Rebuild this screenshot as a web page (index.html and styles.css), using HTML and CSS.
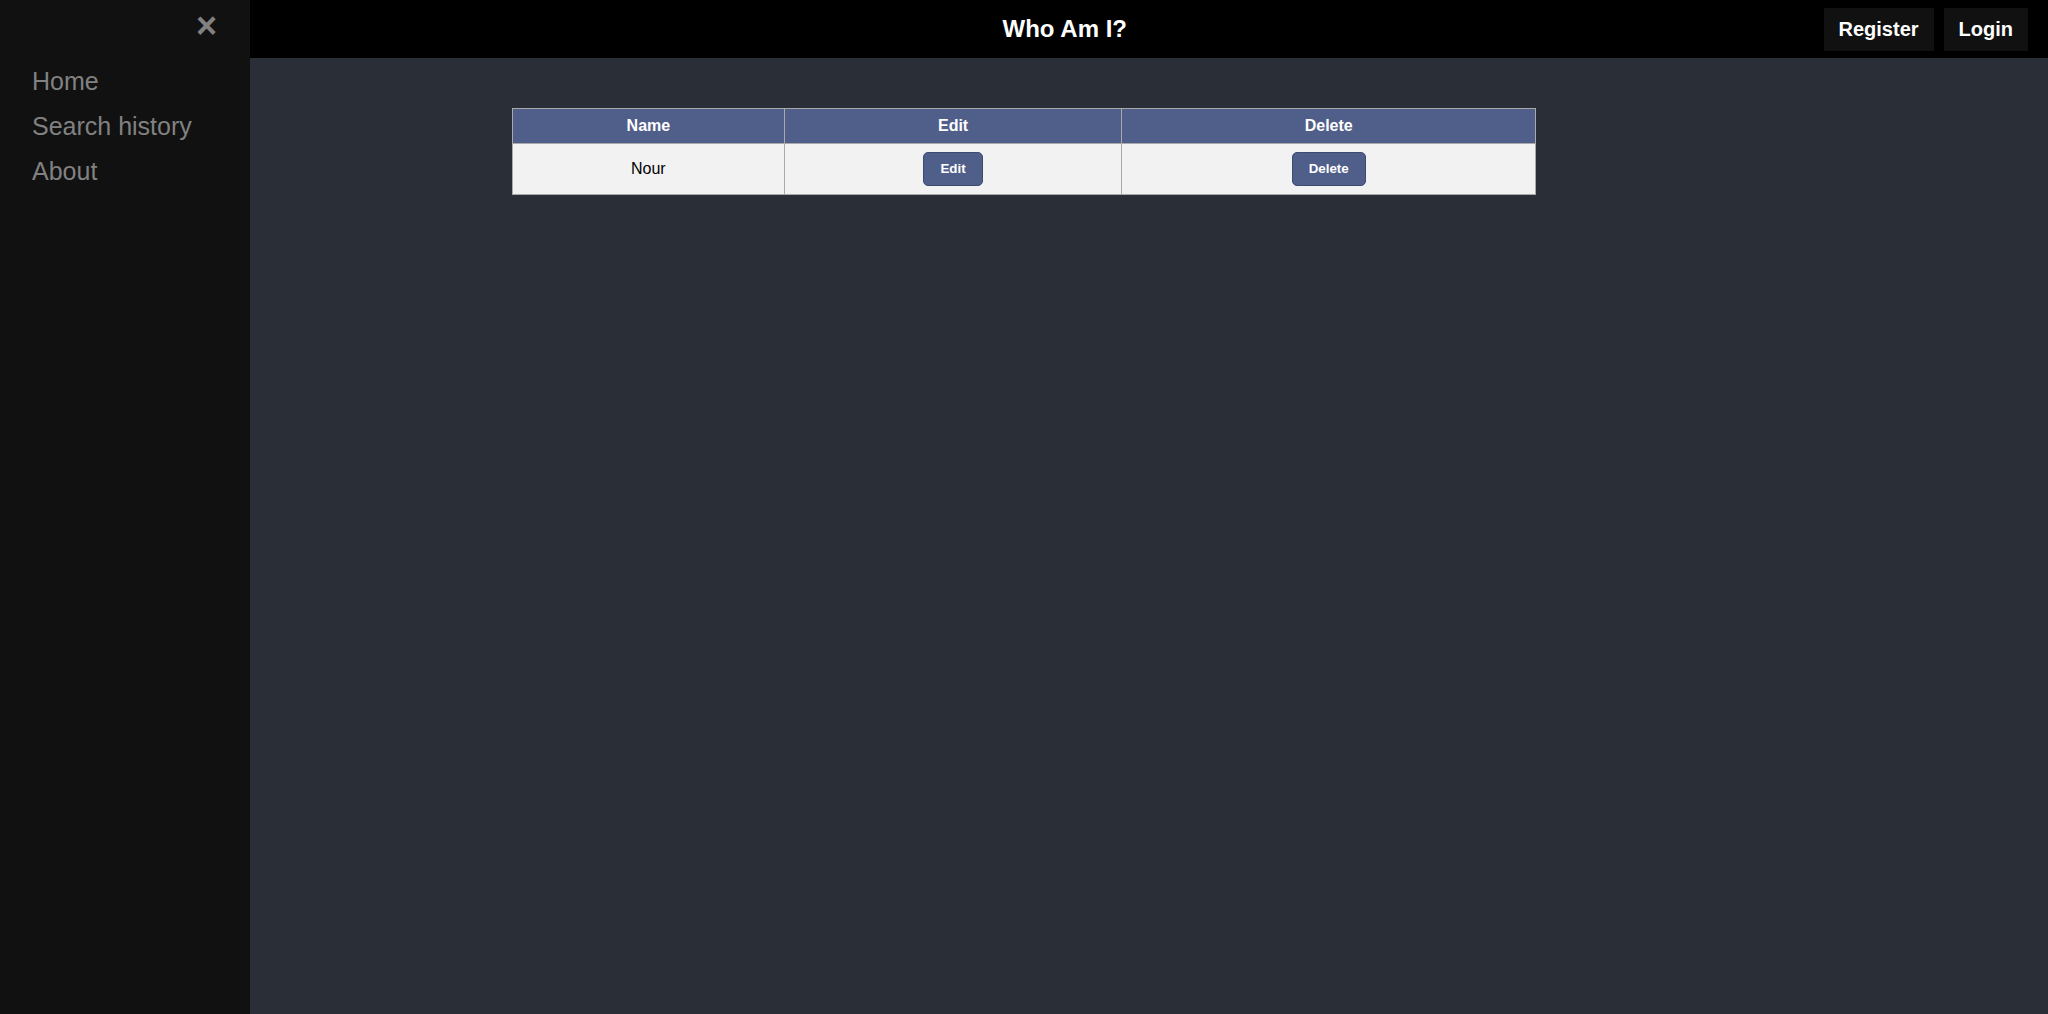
FILE: index.html
```html
<!DOCTYPE html>
<html>
<head>
<meta charset="utf-8">
<title>Who Am I?</title>
<link rel="stylesheet" href="styles.css">
</head>
<body>
<div class="app">
  <nav class="sidenav">
    <a href="#" class="closebtn">&times;</a>
    <a href="#" class="navlink">Home</a>
    <a href="#" class="navlink">Search history</a>
    <a href="#" class="navlink">About</a>
  </nav>
  <div class="main">
    <header class="topbar">
      <div class="title">Who Am I?</div>
      <div class="actions">
        <button class="topbtn">Register</button>
        <button class="topbtn">Login</button>
      </div>
    </header>
    <section class="content">
      <table class="grid">
        <thead>
          <tr>
            <th class="c-name">Name</th>
            <th class="c-edit">Edit</th>
            <th class="c-del">Delete</th>
          </tr>
        </thead>
        <tbody>
          <tr>
            <td>Nour</td>
            <td><button class="rowbtn">Edit</button></td>
            <td><button class="rowbtn">Delete</button></td>
          </tr>
        </tbody>
      </table>
    </section>
  </div>
</div>
</body>
</html>
```

FILE: styles.css
```css
* { box-sizing: border-box; }
html, body { margin: 0; padding: 0; height: 100%; }
body {
  font-family: "Liberation Sans", Arial, sans-serif;
  background: #2a2e37;
}
.app {
  display: flex;
  min-height: 1014px;
}
.sidenav {
  width: 250px;
  flex: 0 0 250px;
  background: #111111;
  padding-top: 59px;
  position: relative;
  display: flex;
  flex-direction: column;
}
.sidenav a {
  text-decoration: none;
  color: #818181;
}
.navlink {
  padding: 8px 8px 8px 32px;
  font-size: 25px;
  display: block;
}
.closebtn {
  position: absolute;
  top: -3px;
  right: 25px;
  font-size: 36px;
  font-weight: bold;
  padding: 8px 8px 8px 32px;
}
.main {
  flex: 1;
  display: flex;
  flex-direction: column;
  background: #2a2e37;
}
.topbar {
  height: 58px;
  background: #000;
  display: flex;
  align-items: center;
  padding-left: 56px;
  padding-right: 20px;
}
.title {
  flex: 1;
  text-align: center;
  color: #fff;
  font-weight: bold;
  font-size: 24px;
}
.actions {
  display: flex;
  gap: 10px;
}
.topbtn {
  font-family: "Liberation Sans", Arial, sans-serif;
  font-weight: bold;
  font-size: 20px;
  line-height: 23px;
  color: #fff;
  background: #111111;
  border: none;
  padding: 10px 15px;
}
.content {
  padding-top: 50px;
  padding-left: 262px;
}
.grid {
  width: 1024px;
  border-collapse: collapse;
  background: #f2f2f2;
  border: 1px solid #a9a9a9;
}
.grid th, .grid td {
  border: 1px solid #a9a9a9;
  text-align: center;
  padding: 8px;
  font-size: 16px;
}
.grid th {
  background: #505e8a;
  color: #fff;
  font-weight: bold;
  line-height: 18px;
}
.grid td {
  color: #000;
}
.c-name { width: 272px; }
.c-edit { width: 338px; }
.c-del { width: 414px; }
.rowbtn {
  font-family: "Liberation Sans", Arial, sans-serif;
  font-weight: bold;
  font-size: 13.33px;
  line-height: 16px;
  color: #fff;
  background: #505e8a;
  border: 1px solid #3e4a70;
  border-radius: 5px;
  padding: 8px 16px;
  vertical-align: middle;
}
```
